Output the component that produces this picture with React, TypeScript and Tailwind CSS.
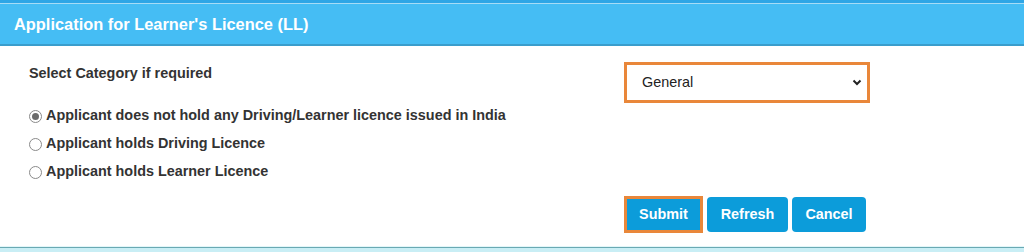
import { useState } from 'react';

const options = [
  'Applicant does not hold any Driving/Learner licence issued in India',
  'Applicant holds Driving Licence',
  'Applicant holds Learner Licence',
];

function Radio({ checked }: { checked: boolean }) {
  return (
    <span className="flex h-[13px] w-[13px] shrink-0 items-center justify-center rounded-full border border-[#8a8a8a] bg-white">
      {checked && <span className="h-[7px] w-[7px] rounded-full bg-[#6b6b6b]" />}
    </span>
  );
}

export default function App() {
  const [selected, setSelected] = useState(0);

  return (
    <div className="h-[252px] w-[1024px] overflow-hidden bg-white font-['Liberation_Sans',Arial,sans-serif]">
      {/* Top strip + header */}
      <div className="h-[3px] bg-[#2ea6e6]" />
      <div className="h-[1px] bg-[#a6dcf6]" />
      <div className="flex h-[40px] items-center bg-[#45bdf4] pl-[14px] text-[16.4px] font-bold text-white">
        Application for Learner&apos;s Licence (LL)
      </div>
      <div className="h-[2px] bg-[#3a9dcc]" />

      {/* Body */}
      <div className="grid h-[200px] grid-cols-[595px_1fr] grid-rows-[auto_1fr] pl-[29px]">
        <div className="pt-[19px]">
          <div className="text-[14.4px] font-bold leading-[16px] text-[#333]">Select Category if required</div>
          <div className="mt-[21px] flex flex-col">
            {options.map((label, i) => (
              <label
                key={label}
                onClick={() => setSelected(i)}
                className="flex h-[28px] cursor-pointer items-center gap-[4px] text-[14.4px] font-bold text-[#333]"
              >
                <Radio checked={selected === i} />
                {label}
              </label>
            ))}
          </div>
        </div>

        <div className="pt-[16px]">
          <div className="relative h-[41px] w-[246px] border-[3px] border-[#e9873a] bg-white">
            <select className="h-full w-full appearance-none bg-white pl-[15px] text-[14.4px] text-[#222] outline-none">
              <option>General</option>
              <option>SC</option>
              <option>ST</option>
              <option>OBC</option>
            </select>
            <svg
              className="pointer-events-none absolute right-[5px] top-[14px]"
              width="10"
              height="7"
              viewBox="0 0 10 7"
              fill="none"
            >
              <path d="M1.5 1.5 L5 5 L8.5 1.5" stroke="#222" strokeWidth="2" />
            </svg>
          </div>
        </div>

        <div />
        <div className="flex items-center gap-[4px] self-start pt-[10px]">
          <span className="border-[3px] border-[#e9873a]">
            <button className="block h-[31px] w-[73px] bg-[#0c9cda] text-[14.4px] font-bold text-white">Submit</button>
          </span>
          <button className="h-[35px] w-[81px] rounded-[4px] bg-[#0c9cda] text-[14.4px] font-bold text-white">Refresh</button>
          <button className="h-[35px] w-[74px] rounded-[4px] bg-[#0c9cda] text-[14.4px] font-bold text-white">Cancel</button>
        </div>
      </div>

      {/* Bottom edge */}
      <div className="h-[1px] bg-[#e2f6f9]" />
      <div className="h-[1px] bg-[#6aa9b3]" />
      <div className="h-[4px] bg-[#c9eef5]" />
    </div>
  );
}
